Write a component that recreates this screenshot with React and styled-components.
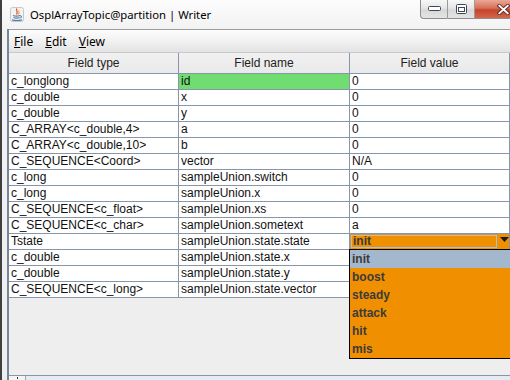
import styled, { createGlobalStyle } from "styled-components"

const GRID = "#8796a8"
const ORANGE = "#f09000"

const GlobalStyle = createGlobalStyle`
  html, body {
    margin: 0;
    padding: 0;
    background: #ffffff;
  }
`

const Window = styled.div`
  width: 510px;
  height: 380px;
  overflow: hidden;
  box-sizing: border-box;
  display: flex;
  flex-direction: column;
  border-left: 2px solid #3f3f3f;
  background: linear-gradient(#fcfcfc, #f2f2f2 30px, #eeeeee);
`

const TitleBar = styled.div`
  height: 29px;
  flex-shrink: 0;
  display: flex;
  align-items: flex-start;
`

const TitleGroup = styled.div`
  height: 29px;
  display: flex;
  align-items: center;
  gap: 6px;
  padding-left: 8px;
  font-family: "Noto Sans", "Open Sans", sans-serif;
  font-size: 11.3px;
  color: #000000;
`

const WindowButtons = styled.div`
  margin-left: auto;
  display: flex;
  height: 19px;
`

const CaptionButton = styled.div`
  box-sizing: border-box;
  width: ${p => p.$width}px;
  height: 19px;
  display: flex;
  align-items: center;
  justify-content: ${p => (p.$close ? "flex-start" : "center")};
  padding-left: ${p => (p.$close ? 22 : 0)}px;
  border: 1px solid #8d8d8d;
  border-top: none;
  border-left: ${p => (p.$first ? "1px solid #8d8d8d" : "none")};
  border-right: ${p => (p.$close ? "none" : "1px solid #9a9a9a")};
  border-bottom-left-radius: ${p => (p.$first ? 4 : 0)}px;
  background: ${p =>
    p.$close
      ? "linear-gradient(#e9a896, #d86f58 45%, #c7432b 55%, #d4654c)"
      : "linear-gradient(#f7f7f7, #e6e6e6 45%, #d7d7d7 55%, #e4e4e4)"};
`

const Body = styled.div`
  flex: 1;
  min-height: 0;
  display: flex;
  padding-left: 5px;
`

const Client = styled.div`
  flex: 1;
  min-width: 0;
  display: flex;
  flex-direction: column;
  border-left: 2px solid #74869a;
  background: #eeeeee;
`

const MenuBar = styled.div`
  height: 22px;
  flex-shrink: 0;
  display: flex;
  align-items: center;
  border-top: 1px solid #9c9c9c;
  border-bottom: 1px solid #c9c9c9;
  background: linear-gradient(#fdfdfd, #f1f1f1 50%, #e3e3e3);
  font-family: "Noto Sans", "Open Sans", sans-serif;
  font-size: 12px;
  color: #000000;
`

const MenuItem = styled.span`
  padding: 0 6px;
  &:first-child {
    padding-left: 5px;
  }
`

const Mnemonic = styled.span`
  text-decoration: underline;
`

const TableArea = styled.div`
  flex: 1;
  min-height: 0;
  background: #eeeeee;
  font-family: "Liberation Sans", Arial, sans-serif;
  font-size: 12px;
`

const Row = styled.div`
  display: grid;
  grid-template-columns: 170px 171px 1fr;
`

const HeaderCell = styled.div`
  box-sizing: border-box;
  height: 21px;
  line-height: 20px;
  text-align: center;
  color: #222222;
  background: linear-gradient(#f1f1f1, #e9e9e9);
  border-bottom: 1px solid ${GRID};
  border-right: 1px solid ${GRID};
`

const Cell = styled.div`
  position: relative;
  box-sizing: border-box;
  height: 16px;
  line-height: 15px;
  padding-left: 2px;
  white-space: nowrap;
  color: #111111;
  background: ${p => p.$bg || "#ffffff"};
  border-bottom: 1px solid ${GRID};
  border-right: 1px solid ${GRID};
`

const Combo = styled.div`
  display: flex;
  height: 15px;
  margin-left: -2px;
  background: ${ORANGE};
`

const ComboField = styled.div`
  box-sizing: border-box;
  flex: 1;
  height: 13px;
  margin: 1px 0 0 1px;
  padding-left: 1px;
  line-height: 11px;
  font-weight: bold;
  color: #3a3a3a;
  border: 1px solid #a9c2da;
`

const ComboArrow = styled.div`
  width: 12px;
  display: flex;
  justify-content: flex-end;
  padding-top: 3px;
`

const Popup = styled.div`
  position: absolute;
  top: 100%;
  left: -1px;
  z-index: 5;
  width: 200px;
  border: 1px solid #000000;
  background: ${ORANGE};
`

const PopupItem = styled.div`
  height: 18px;
  line-height: 18px;
  padding-left: 2px;
  font-weight: bold;
  color: #3b3b3b;
  background: ${p => (p.$selected ? "#a3b8cc" : ORANGE)};
`

const ScrollBar = styled.div`
  height: 4px;
  flex-shrink: 0;
  display: flex;
  border-top: 1px solid ${GRID};
`

const ScrollButton = styled.div`
  width: 16px;
  display: flex;
  justify-content: center;
  background: #f4f4f4;
  border-right: 1px solid #9aa8b8;
`

const ScrollTick = styled.div`
  width: 1px;
  height: 2px;
  margin-top: 1px;
  background: #333333;
`

const ScrollTrack = styled.div`
  flex: 1;
  background: #e4ebf3;
`

const JavaIcon = () => (
  <svg width="14" height="15" viewBox="0 0 14 15">
    <rect x="0.5" y="0.5" width="13" height="14" rx="2" fill="#f3f3f3" stroke="#c8c8c8" />
    <path d="M7 1.5 C5 3.5, 9 4.5, 6.5 7.5" stroke="#e4572e" strokeWidth="1.3" fill="none" />
    <path d="M9 3.5 C8 5, 10 5.5, 8.5 7.5" stroke="#f08a24" strokeWidth="1" fill="none" />
    <path d="M3 8.5 Q6.5 9.8 10 8.5" stroke="#4f7ea8" strokeWidth="1.2" fill="none" />
    <path d="M3.5 10.5 Q6.5 11.6 9.5 10.5" stroke="#4f7ea8" strokeWidth="1.2" fill="none" />
    <path d="M10 8.6 q2 0 1.4 1.6 q-.5 1 -1.8 1" stroke="#4f7ea8" strokeWidth="1" fill="none" />
    <path d="M2 12.8 Q7 14.2 12 12.8" stroke="#4f7ea8" strokeWidth="1.2" fill="none" />
  </svg>
)

const MinGlyph = () => (
  <svg width="13" height="6" viewBox="0 0 13 6">
    <rect x="0.5" y="0.5" width="12" height="4" rx="1" fill="#ffffff" stroke="#3c4656" />
  </svg>
)

const MaxGlyph = () => (
  <svg width="11" height="10" viewBox="0 0 11 10">
    <rect x="0.5" y="0.5" width="10" height="9" rx="1" fill="#ffffff" stroke="#3c4656" />
    <rect x="2.5" y="3.5" width="6" height="4" fill="#ffffff" stroke="#3c4656" />
  </svg>
)

const CloseGlyph = () => (
  <svg width="14" height="11" viewBox="0 0 14 11">
    <path d="M2.5 1.5 L11.5 9.5 M11.5 1.5 L2.5 9.5" stroke="#5a2e25" strokeWidth="4" strokeLinecap="square" />
    <path d="M2.5 1.5 L11.5 9.5 M11.5 1.5 L2.5 9.5" stroke="#ffffff" strokeWidth="2" strokeLinecap="square" />
  </svg>
)

const Triangle = () => (
  <svg width="9" height="5" viewBox="0 0 9 5">
    <path d="M0 0 H9 L4.5 5 Z" fill="#1a1a1a" />
  </svg>
)

const rows = [
  ["c_longlong", "id", "0"],
  ["c_double", "x", "0"],
  ["c_double", "y", "0"],
  ["C_ARRAY<c_double,4>", "a", "0"],
  ["C_ARRAY<c_double,10>", "b", "0"],
  ["C_SEQUENCE<Coord>", "vector", "N/A"],
  ["c_long", "sampleUnion.switch", "0"],
  ["c_long", "sampleUnion.x", "0"],
  ["C_SEQUENCE<c_float>", "sampleUnion.xs", "0"],
  ["C_SEQUENCE<c_char>", "sampleUnion.sometext", "a"],
  ["Tstate", "sampleUnion.state.state", null],
  ["c_double", "sampleUnion.state.x", ""],
  ["c_double", "sampleUnion.state.y", ""],
  ["C_SEQUENCE<c_long>", "sampleUnion.state.vector", ""],
]

const states = ["init", "boost", "steady", "attack", "hit", "mis"]

export default function App() {
  return (
    <>
      <GlobalStyle />
      <Window>
        <TitleBar>
          <TitleGroup>
            <JavaIcon />
            <span>OsplArrayTopic@partition | Writer</span>
          </TitleGroup>
          <WindowButtons>
            <CaptionButton $width={28} $first>
              <MinGlyph />
            </CaptionButton>
            <CaptionButton $width={27}>
              <MaxGlyph />
            </CaptionButton>
            <CaptionButton $width={35} $close>
              <CloseGlyph />
            </CaptionButton>
          </WindowButtons>
        </TitleBar>
        <Body>
          <Client>
            <MenuBar>
              <MenuItem><Mnemonic>F</Mnemonic>ile</MenuItem>
              <MenuItem><Mnemonic>E</Mnemonic>dit</MenuItem>
              <MenuItem><Mnemonic>V</Mnemonic>iew</MenuItem>
            </MenuBar>
            <TableArea>
              <Row>
                <HeaderCell>Field type</HeaderCell>
                <HeaderCell>Field name</HeaderCell>
                <HeaderCell>Field value</HeaderCell>
              </Row>
              {rows.map(([type, name, value], i) => (
                <Row key={i}>
                  <Cell>{type}</Cell>
                  <Cell $bg={name === "id" ? "#6fdd6f" : undefined}>{name}</Cell>
                  <Cell>
                    {value === null ? (
                      <>
                        <Combo>
                          <ComboField>init</ComboField>
                          <ComboArrow>
                            <Triangle />
                          </ComboArrow>
                        </Combo>
                        <Popup>
                          {states.map((s, k) => (
                            <PopupItem key={s} $selected={k === 0}>{s}</PopupItem>
                          ))}
                        </Popup>
                      </>
                    ) : (
                      value
                    )}
                  </Cell>
                </Row>
              ))}
            </TableArea>
            <ScrollBar>
              <ScrollButton>
                <ScrollTick />
              </ScrollButton>
              <ScrollTrack />
            </ScrollBar>
          </Client>
        </Body>
      </Window>
    </>
  )
}
